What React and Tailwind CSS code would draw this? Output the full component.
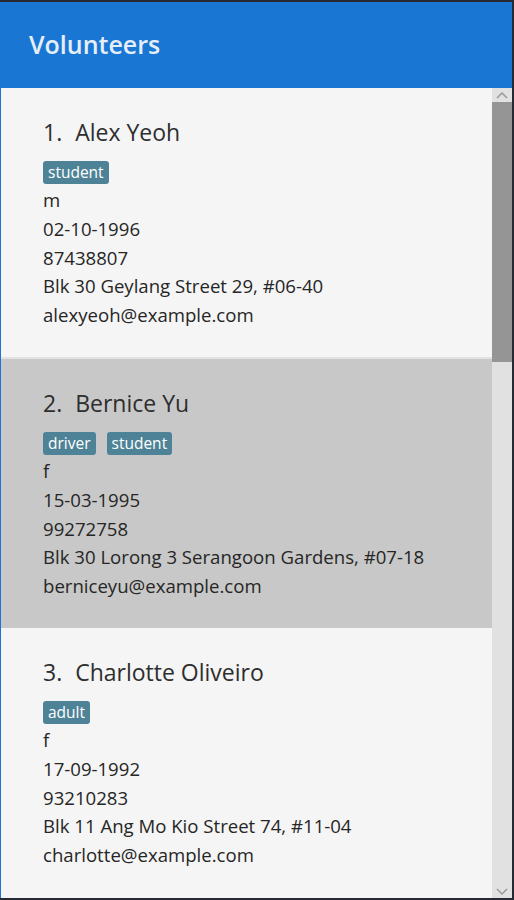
import React from "react";

const people = [
  { n: 1, name: "Alex Yeoh", tags: ["student"], g: "m", dob: "02-10-1996", phone: "87438807", addr: "Blk 30 Geylang Street 29, #06-40", email: "alexyeoh@example.com" },
  { n: 2, name: "Bernice Yu", tags: ["driver", "student"], g: "f", dob: "15-03-1995", phone: "99272758", addr: "Blk 30 Lorong 3 Serangoon Gardens, #07-18", email: "berniceyu@example.com", sel: true },
  { n: 3, name: "Charlotte Oliveiro", tags: ["adult"], g: "f", dob: "17-09-1992", phone: "93210283", addr: "Blk 11 Ang Mo Kio Street 74, #11-04", email: "charlotte@example.com" },
];

function Card({ p }) {
  return (
    <div className={`${p.sel ? "bg-[#c8c8c8]" : "bg-[#f5f5f5]"} h-[269px] pl-[42px] pt-[29px] shrink-0`}>
      <div className="text-[23px] leading-[31px] text-[#2e2e2e]">
        {p.n}.&nbsp;&nbsp;<span className="ml-[1px]">{p.name}</span>
      </div>
      <div className="flex gap-[11px] mt-[13px] mb-[2px]">
        {p.tags.map((t) => (
          <span key={t} className="bg-[#4e8397] text-white text-[15.5px] leading-[23px] px-[5px] rounded-[3px]">
            {t}
          </span>
        ))}
      </div>
      <div className="text-[18.6px] leading-[28.8px] text-[#262626]">
        <div>{p.g}</div>
        <div>{p.dob}</div>
        <div>{p.phone}</div>
        <div>{p.addr}</div>
        <div>{p.email}</div>
      </div>
    </div>
  );
}

export default function App() {
  return (
    <div className="w-[514px] h-[900px] bg-[#262b33] pt-[2px] pr-[2px] pb-[2px] overflow-hidden" style={{ fontFamily: "'Open Sans', 'Noto Sans', sans-serif" }}>
      <div className="h-full flex flex-col border-l border-[#1976d2]">
        <div className="h-[86px] bg-[#1a76d3] flex items-center pl-[28px] shrink-0">
          <span className="text-[25px] font-semibold text-[#e6eef8]">Volunteers</span>
        </div>
        <div className="flex flex-1 min-h-0">
          <div className="flex-1 flex flex-col overflow-hidden bg-[#f5f5f5]">
            <Card p={people[0]} />
            <div className="h-[2px] bg-[#e2e2e2] shrink-0" />
            <Card p={people[1]} />
            <Card p={people[2]} />
          </div>
          <div className="w-[20px] bg-[#e1e1e1] flex flex-col shrink-0">
            <div className="h-[14px] flex items-center justify-center">
              <svg width="12" height="7" viewBox="0 0 12 7"><path d="M1 6 L6 1 L11 6" fill="none" stroke="#9a9a9a" strokeWidth="1.5" /></svg>
            </div>
            <div className="h-[260px] bg-[#959595]" />
            <div className="flex-1" />
            <div className="h-[14px] flex items-center justify-center">
              <svg width="12" height="7" viewBox="0 0 12 7"><path d="M1 1 L6 6 L11 1" fill="none" stroke="#9a9a9a" strokeWidth="1.5" /></svg>
            </div>
          </div>
        </div>
      </div>
    </div>
  );
}
